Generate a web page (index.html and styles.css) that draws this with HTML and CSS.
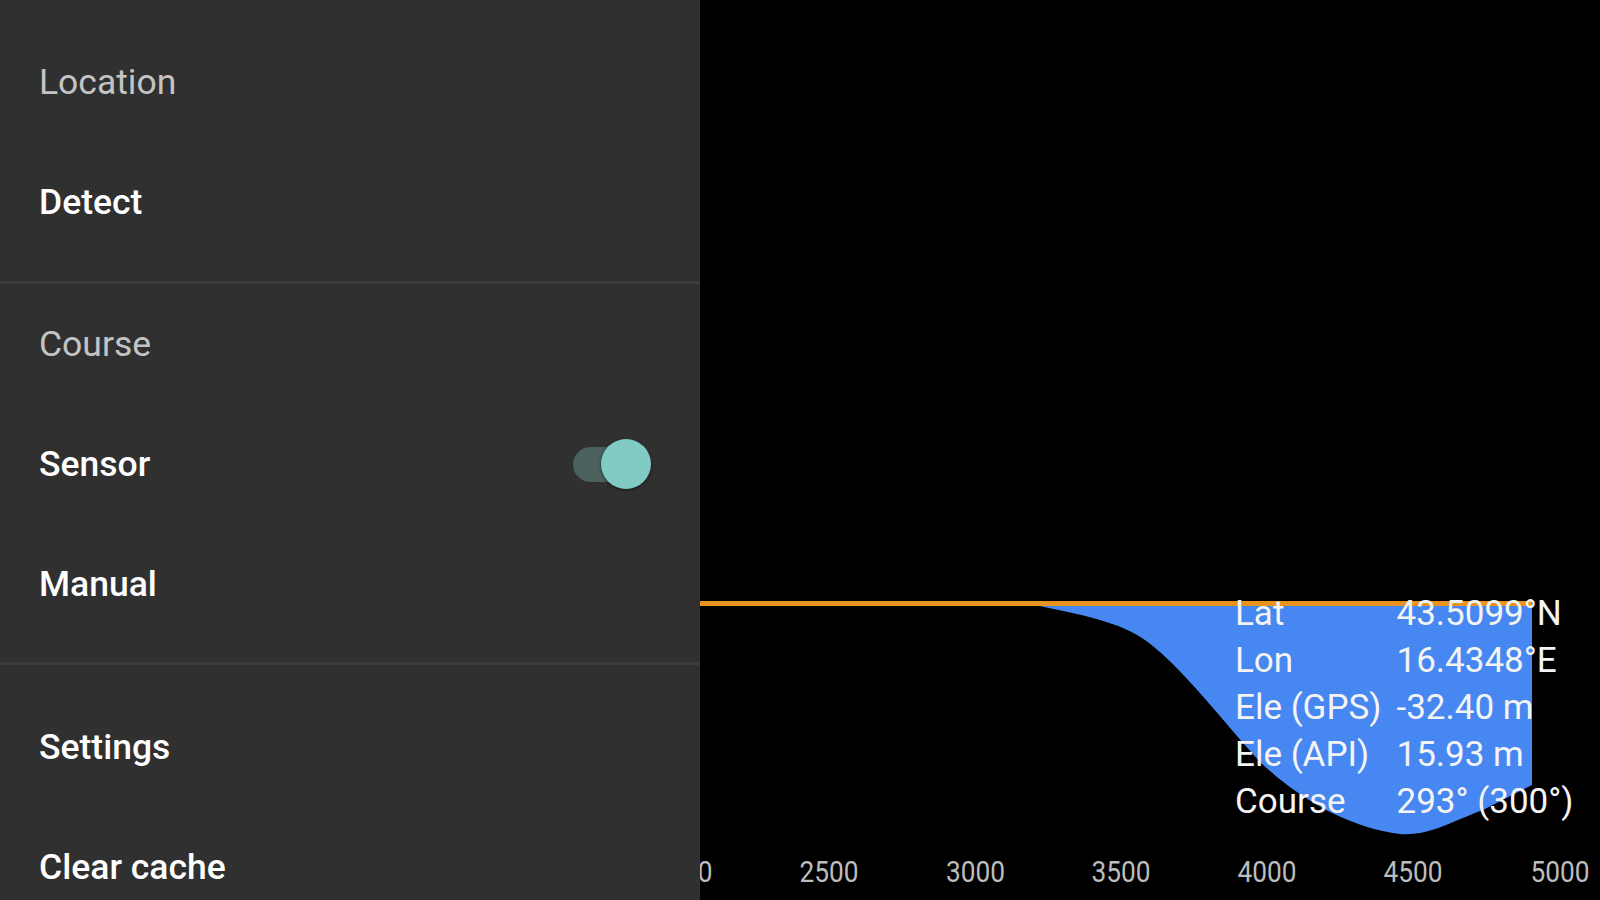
FILE: index.html
```html
<!DOCTYPE html>
<html lang="en">
<head>
<meta charset="utf-8">
<title>Elevation</title>
<link rel="stylesheet" href="styles.css">
</head>
<body>
<div class="app">
  <nav class="drawer">
    <section class="group group-first">
      <div class="row header">Location</div>
      <div class="row item">Detect</div>
    </section>
    <div class="divider"></div>
    <section class="group group-mid">
      <div class="row header">Course</div>
      <div class="row item">
        <span>Sensor</span>
        <span class="switch"><span class="track"></span><span class="thumb"></span></span>
      </div>
      <div class="row item">Manual</div>
    </section>
    <div class="divider"></div>
    <section class="group group-last">
      <div class="row item">Settings</div>
      <div class="row item">Clear cache</div>
    </section>
  </nav>
  <main class="chart">
    <svg class="plot" width="900" height="900" viewBox="0 0 900 900">
      <path class="area" d="M326,603 C372,613 415,620 442,638 C478,662 520,718 560,762 C600,800 650,828 700,834 C730,836 750,822 783,810 L832,785 L832,603 Z"/>
      <rect class="line" x="0" y="601" width="832" height="5"/>
      <g class="ticks">
        <text x="-17" y="881.5" textLength="59" lengthAdjust="spacingAndGlyphs">2000</text>
        <text x="129" y="881.5" textLength="59" lengthAdjust="spacingAndGlyphs">2500</text>
        <text x="275.5" y="881.5" textLength="59" lengthAdjust="spacingAndGlyphs">3000</text>
        <text x="421" y="881.5" textLength="59" lengthAdjust="spacingAndGlyphs">3500</text>
        <text x="567" y="881.5" textLength="59" lengthAdjust="spacingAndGlyphs">4000</text>
        <text x="713" y="881.5" textLength="59" lengthAdjust="spacingAndGlyphs">4500</text>
        <text x="860" y="881.5" textLength="59" lengthAdjust="spacingAndGlyphs">5000</text>
      </g>
    </svg>
    <div class="info">
      <span>Lat</span><span>43.5099°N</span>
      <span>Lon</span><span>16.4348°E</span>
      <span>Ele (GPS)</span><span>-32.40 m</span>
      <span>Ele (API)</span><span>15.93 m</span>
      <span>Course</span><span>293° (300°)</span>
    </div>
  </main>
</div>
</body>
</html>
```

FILE: styles.css
```css
html, body {
  margin: 0;
  padding: 0;
  width: 1600px;
  height: 900px;
  overflow: hidden;
  background: #000;
  font-family: Roboto, "Liberation Sans", sans-serif;
}

.app {
  display: flex;
  width: 1600px;
  height: 900px;
}

.drawer {
  width: 700px;
  flex: none;
  background: #303030;
  display: flex;
  flex-direction: column;
  overflow: hidden;
}

.group-first { padding: 22px 0 19px; }
.group-mid { padding: 0 0 18px; }
.group-last { padding: 22px 0 0; }

.divider {
  height: 3px;
  background: #3c3c3c;
  flex: none;
}

.row {
  height: 120px;
  display: flex;
  align-items: center;
  justify-content: space-between;
  padding-left: 39px;
  padding-right: 49px;
  font-size: 35.5px;
  line-height: 42px;
}

.header {
  color: #c4c4c4;
  font-weight: 400;
}

.item {
  color: #ffffff;
  font-weight: 500;
}

.switch {
  position: relative;
  width: 78px;
  height: 50px;
  flex: none;
}

.track {
  position: absolute;
  left: 0;
  top: 8px;
  width: 70px;
  height: 35px;
  border-radius: 18px;
  background: #4a615e;
}

.thumb {
  position: absolute;
  right: 0;
  top: 0;
  width: 50px;
  height: 50px;
  border-radius: 50%;
  background: #80cbc4;
  box-shadow: 0 1px 3px rgba(0, 0, 0, 0.55);
}

.chart {
  position: relative;
  flex: 1;
  background: #000;
  overflow: hidden;
}

.plot {
  display: block;
}

.area { fill: #4787f2; }
.line { fill: #e8921f; }

.ticks text {
  font-family: Roboto, "Liberation Sans", sans-serif;
  font-size: 30px;
  fill: #bdbdbd;
  text-anchor: middle;
}

.info {
  position: absolute;
  left: 535px;
  top: 590px;
  display: grid;
  grid-template-columns: 161.5px auto;
  font-size: 35px;
  line-height: 47px;
  color: #f4f4f4;
  white-space: nowrap;
}
```
